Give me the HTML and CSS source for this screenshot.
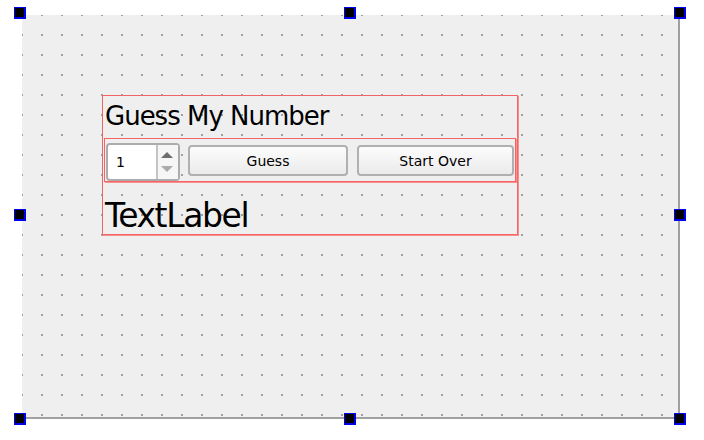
FILE: index.html
```html
<!DOCTYPE html>
<html>
<head>
<meta charset="utf-8">
<link rel="stylesheet" href="styles.css">
</head>
<body>
<div class="stage">
  <div class="form">
    <div class="vlayout">
      <div class="title">Guess My Number</div>
      <div class="hlayout">
        <div class="spin">
          <span class="spin-value">1</span>
          <div class="spin-arrows">
            <svg width="20" height="34" viewBox="0 0 20 34">
              <polygon points="3,13 9,7 15,13" fill="#6e6e6e"/>
              <polygon points="3,21 15,21 9,27" fill="#ababab"/>
            </svg>
          </div>
        </div>
        <div class="btn btn-guess">Guess</div>
        <div class="btn btn-start">Start Over</div>
      </div>
      <div class="textlabel">TextLabel</div>
    </div>
  </div>
  <div class="handle h-tl"></div>
  <div class="handle h-tc"></div>
  <div class="handle h-tr"></div>
  <div class="handle h-ml"></div>
  <div class="handle h-mr"></div>
  <div class="handle h-bl"></div>
  <div class="handle h-bc"></div>
  <div class="handle h-br"></div>
</div>
</body>
</html>
```
FILE: styles.css
```css
html, body {
  margin: 0;
  background: #ffffff;
  font-family: "DejaVu Sans", "Liberation Sans", sans-serif;
}

.stage {
  position: relative;
  width: 704px;
  height: 440px;
  box-sizing: border-box;
  padding: 15px 0 0 22px;
}

.form {
  width: 658px;
  height: 404px;
  box-sizing: border-box;
  border-right: 2px solid #a0a0a0;
  border-bottom: 2px solid #a0a0a0;
  background-color: #efefef;
  background-image: conic-gradient(at 2px 2px, transparent 75%, #a0a0a0 0);
  background-size: 20px 20px;
  background-position: -1px -1px;
  padding: 80px 0 0 80px;
}

.vlayout {
  width: 416px;
  height: 140px;
  box-sizing: border-box;
  border: 1px solid #f56464;
  box-shadow: 1px 1px 0 #f79090;
  display: flex;
  flex-direction: column;
}

.title {
  height: 42px;
  flex: none;
  box-sizing: border-box;
  padding: 5px 0 0 2px;
  font-size: 26px;
  line-height: 30px;
  letter-spacing: -1px;
  color: #000;
}

.hlayout {
  height: 44px;
  flex: none;
  margin: 0 1px;
  box-sizing: border-box;
  border: 1px solid #f56464;
  box-shadow: 1px 1px 0 #f79090;
  display: flex;
  align-items: flex-start;
  padding-left: 1px;
}

.spin {
  margin-top: 4px;
  width: 74px;
  height: 38px;
  box-sizing: border-box;
  border: 2px solid #acacac;
  border-radius: 4px;
  background: #ffffff;
  display: flex;
  align-items: stretch;
}

.spin-value {
  flex: 1;
  padding-left: 8px;
  font-size: 14px;
  line-height: 34px;
  color: #000;
}

.spin-arrows {
  width: 20px;
  border-left: 2px solid #c4c4c4;
  background: #f6f6f6;
  display: flex;
}

.btn {
  margin-top: 6px;
  height: 31px;
  box-sizing: border-box;
  border: 2px solid #b0b0b0;
  border-radius: 4px;
  background: linear-gradient(#fcfcfc, #ebebeb);
  display: flex;
  align-items: center;
  justify-content: center;
  font-size: 14px;
  color: #000;
}

.btn-guess {
  width: 160px;
  margin-left: 8px;
}

.btn-start {
  width: 157px;
  margin-left: 9px;
}

.textlabel {
  flex: 1;
  box-sizing: border-box;
  padding: 15px 0 0 2px;
  font-size: 33px;
  line-height: 38px;
  letter-spacing: -1.4px;
  color: #000;
}

.handle {
  position: absolute;
  width: 9px;
  height: 9px;
  background: #000;
  border-left: 1px solid #0000f0;
  border-top: 1px solid #0000f0;
  border-right: 2px solid #0000f0;
  border-bottom: 2px solid #0000f0;
}

.h-tl { left: 14px; top: 7px; }
.h-tc { left: 344px; top: 7px; }
.h-tr { left: 674px; top: 7px; }
.h-ml { left: 14px; top: 209px; }
.h-mr { left: 674px; top: 209px; }
.h-bl { left: 14px; top: 413px; }
.h-bc { left: 344px; top: 413px; }
.h-br { left: 674px; top: 413px; }
```
